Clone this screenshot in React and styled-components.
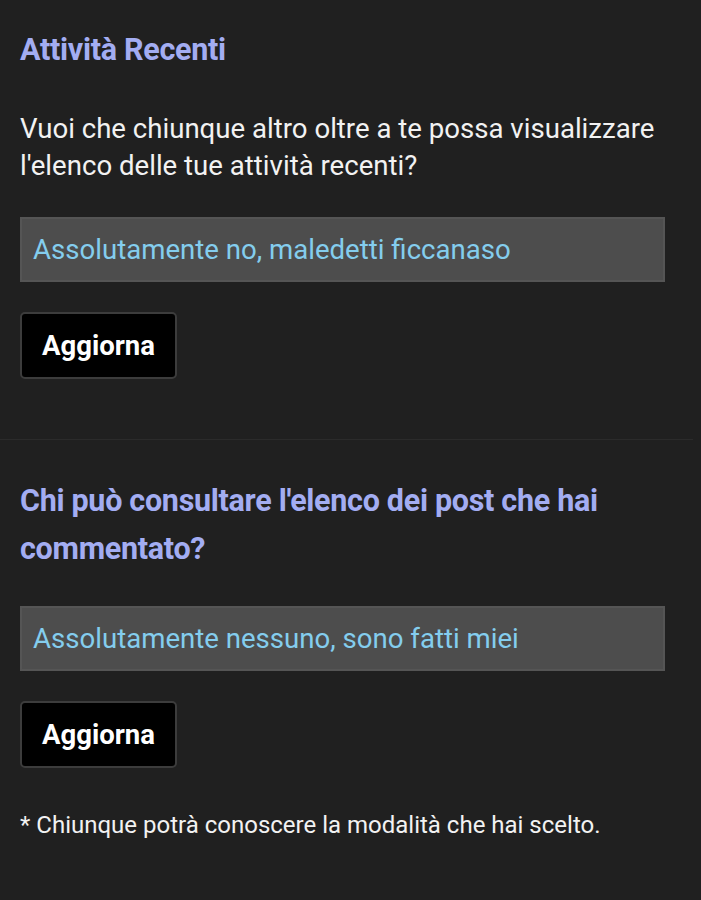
import React from 'react';
import styled, { createGlobalStyle } from 'styled-components';

const Global = createGlobalStyle`
    html, body {
        margin: 0;
        padding: 0;
        background: #202020;
    }
    body {
        font-family: Roboto, "Liberation Sans", sans-serif;
    }
`

const Page = styled.div`
    width: 701px;
    min-height: 900px;
    background: #202020;
    color: #f2f2f2;
`

const Section = styled.section`
    padding: ${(p) => p.$top}px 36px ${(p) => p.$bottom}px 20px;
`

const Divider = styled.hr`
    margin: 0 8px 0 0;
    border: none;
    border-top: 1px solid #2b2b2b;
`

const Title = styled.h2`
    margin: 0;
    font-size: 30.5px;
    font-weight: 700;
    line-height: 48px;
    color: #a3adf2;
    letter-spacing: -0.3px;
`

const Text = styled.p`
    margin: 36px 0 0;
    font-size: 27.6px;
    line-height: 37px;
    color: #f2f2f2;
`

const Select = styled.div`
    box-sizing: border-box;
    height: 65px;
    margin-top: 33px;
    display: flex;
    align-items: center;
    padding-left: 11px;
    background: #4d4d4d;
    border: 2px solid #555555;
    color: #84cdee;
    font-size: 27.6px;
`

const Button = styled.button`
    box-sizing: border-box;
    margin-top: 30px;
    height: 67px;
    width: 157px;
    background: #000;
    border: 2px solid #3c3c3c;
    border-radius: 5px;
    color: #fff;
    font-family: Roboto, "Liberation Sans", sans-serif;
    font-size: 27.5px;
    font-weight: 700;
    display: block;
`

const Note = styled.p`
    margin: 43px 0 0;
    font-size: 24px;
    color: #f2f2f2;
`

const App = () => {
    return (
        <Page>
            <Global />
            <Section $top={26} $bottom={60}>
                <Title>Attività Recenti</Title>
                <Text>
                    Vuoi che chiunque altro oltre a te possa visualizzare<br />
                    l'elenco delle tue attività recenti?
                </Text>
                <Select>Assolutamente no, maledetti ficcanaso</Select>
                <Button>Aggiorna</Button>
            </Section>
            <Divider />
            <Section $top={37} $bottom={40}>
                <Title>
                    Chi può consultare l'elenco dei post che hai<br />
                    commentato?
                </Title>
                <Select>Assolutamente nessuno, sono fatti miei</Select>
                <Button>Aggiorna</Button>
                <Note>* Chiunque potrà conoscere la modalità che hai scelto.</Note>
            </Section>
        </Page>
    );
};

export default App;
